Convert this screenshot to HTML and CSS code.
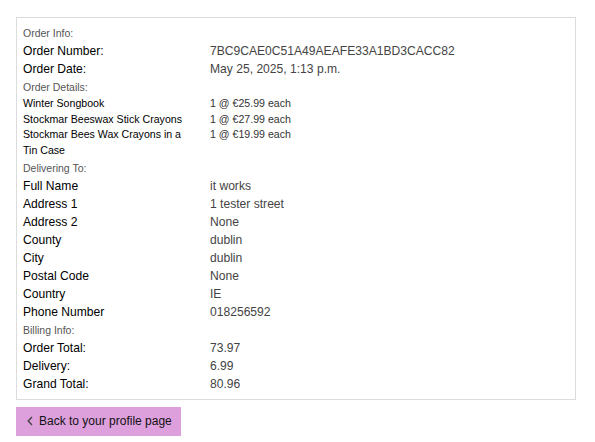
FILE: index.html
```html
<!DOCTYPE html>
<html lang="en">
<head>
<meta charset="utf-8">
<title>Order</title>
<link rel="stylesheet" href="styles.css">
</head>
<body>
<main class="page">
  <section class="order-box">
    <div class="section-label">Order Info:</div>
    <div class="row"><div class="key">Order Number:</div><div class="val">7BC9CAE0C51A49AEAFE33A1BD3CACC82</div></div>
    <div class="row"><div class="key">Order Date:</div><div class="val">May 25, 2025, 1:13 p.m.</div></div>
    <div class="section-label">Order Details:</div>
    <div class="row item"><div class="key">Winter Songbook</div><div class="val">1 @ €25.99 each</div></div>
    <div class="row item"><div class="key">Stockmar Beeswax Stick Crayons</div><div class="val">1 @ €27.99 each</div></div>
    <div class="row item"><div class="key">Stockmar Bees Wax Crayons in a Tin Case</div><div class="val">1 @ €19.99 each</div></div>
    <div class="section-label">Delivering To:</div>
    <div class="row"><div class="key">Full Name</div><div class="val">it works</div></div>
    <div class="row"><div class="key">Address 1</div><div class="val">1 tester street</div></div>
    <div class="row"><div class="key">Address 2</div><div class="val">None</div></div>
    <div class="row"><div class="key">County</div><div class="val">dublin</div></div>
    <div class="row"><div class="key">City</div><div class="val">dublin</div></div>
    <div class="row"><div class="key">Postal Code</div><div class="val">None</div></div>
    <div class="row"><div class="key">Country</div><div class="val">IE</div></div>
    <div class="row"><div class="key">Phone Number</div><div class="val">018256592</div></div>
    <div class="section-label">Billing Info:</div>
    <div class="row"><div class="key">Order Total:</div><div class="val">73.97</div></div>
    <div class="row"><div class="key">Delivery:</div><div class="val">6.99</div></div>
    <div class="row"><div class="key">Grand Total:</div><div class="val">80.96</div></div>
  </section>
  <a class="back-btn" href="#">
    <svg class="chev" width="6" height="10" viewBox="0 0 6 10"><path d="M5 1 L1.2 5 L5 9" fill="none" stroke="#444" stroke-width="1.4"/></svg>
    <span>Back to your profile page</span>
  </a>
</main>
</body>
</html>
```

FILE: styles.css
```css
html, body {
  margin: 0;
  padding: 0;
  background: #fff;
}
body {
  font-family: "Liberation Sans", Arial, sans-serif;
  color: #000;
}
.page {
  padding: 17px 19px 0 16px;
}
.order-box {
  border: 1px solid #dcdcdc;
  padding: 6px 6px 6px 6px;
}
.section-label {
  font-size: 10.5px;
  line-height: 18px;
  color: #555;
}
.row {
  display: grid;
  grid-template-columns: 187px 1fr;
  font-size: 12.1px;
  line-height: 18px;
}
.row .key {
  padding-right: 18px;
  color: #000;
}
.row .val {
  color: #444;
}
.row.item {
  font-size: 10.6px;
  line-height: 15.7px;
}
.row.item .val {
  color: #333;
}
.back-btn {
  display: inline-flex;
  align-items: center;
  gap: 6px;
  margin-top: 7px;
  height: 29px;
  padding: 0 9px 0 11px;
  background: #dda0dd;
  color: #111;
  font-size: 12px;
  text-decoration: none;
}
.chev {
  display: block;
}
```
